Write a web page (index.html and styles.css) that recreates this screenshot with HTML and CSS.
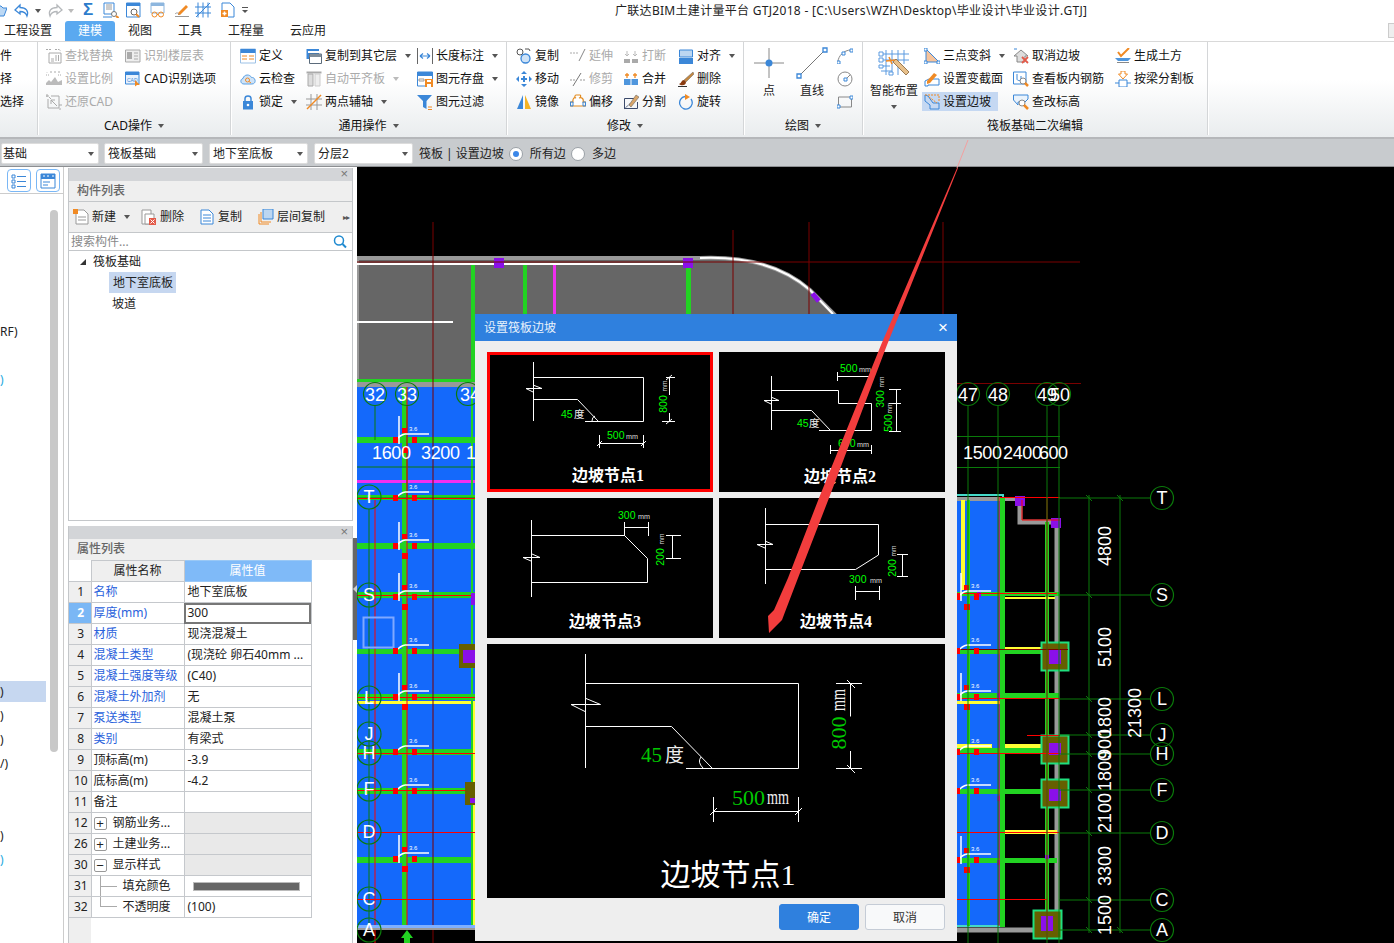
FILE: index.html
```html
<!DOCTYPE html>
<html lang="zh-CN">
<head>
<meta charset="utf-8">
<title>广联达BIM土建计量平台 GTJ2018</title>
<link rel="stylesheet" href="styles.css">
</head>
<body>
<div class="app">
  <header class="qat">
    <div class="qat-icons">
      <svg class="qi q-folder" viewBox="0 0 7 16"><path d="M-8 4H1L3 6H7L4 14H-8Z" fill="#bcd8f4" stroke="#3b87d8"/></svg>
      <svg class="qi" viewBox="0 0 16 16"><path d="M6 3L1 8L6 12V9.500C10 9.500 12 11 13 14C15 9 12 5.500 6 5.500Z" fill="#fff" stroke="#3b87d8" stroke-width="1.300"/></svg>
      <i class="ar q-ar"></i>
      <svg class="qi q-redo" viewBox="0 0 16 16"><path d="M10 3L15 8L10 12V9.500C6 9.500 4 11 3 14C1 9 4 5.500 10 5.500Z" fill="#fff" stroke="#b5b8bb" stroke-width="1.300"/></svg>
      <i class="ar q-ar lite"></i>
      <span class="sigma">Σ</span>
      <svg class="qi q-r" viewBox="0 0 16 16"><path d="M1 1H11V12H1Z" fill="#fff" stroke="#3b87d8"/><path d="M3 3H9M3 5H9M3 7H9" stroke="#9a9a9a"/><path d="M0 15H9" stroke="#3b87d8"/><circle cx="11" cy="12" r="2.500" fill="#fff" stroke="#777"/><path d="M13 14L15.500 16" stroke="#f08a24" stroke-width="2"/></svg>
      <svg class="qi q-r6" viewBox="0 0 16 16"><path d="M.5 1H14V15H.5Z" fill="#fff" stroke="#3b87d8"/><path d="M.5 1H14V4H.5Z" fill="#3b87d8"/><circle cx="8" cy="10" r="3" fill="#fff" stroke="#666"/><path d="M10 12L13 15" stroke="#f08a24" stroke-width="2"/></svg>
      <svg class="qi q-r2" viewBox="0 0 16 16"><path d="M1 1H14V11H1Z" fill="#fff" stroke="#8db6de"/><path d="M1 1H14V4H1Z" fill="#8db6de"/><circle cx="4.500" cy="12.500" r="2.500" fill="none" stroke="#f08a24"/><circle cx="11" cy="12.500" r="2.500" fill="none" stroke="#f08a24"/><path d="M7 12.500H8.500" stroke="#f08a24"/></svg>
      <svg class="qi q-r2" viewBox="0 0 16 16"><path d="M1 14.500H15" stroke="#999"/><path d="M4 11L12 3L14 5L6 13H4Z" fill="#f08a24"/><path d="M1 12C3 10 4 11 6 13" fill="none" stroke="#999"/></svg>
      <svg class="qi q-r4" viewBox="0 0 16 16"><path d="M3 .5V15.500M8 .5V15.500M13 .5V15.500M0 5H16M0 11H16M1 15L15 1" stroke="#3b87d8" fill="none"/></svg>
      <svg class="qi q-r5" viewBox="0 0 16 16"><path d="M2 8V1H10L14 5V15H8" fill="#fff" stroke="#3b87d8"/><path d="M1 8H8V15H1Z" fill="#f08a24"/><path d="M4.500 9.500V13.500M2.500 11.500H6.500" stroke="#fff" stroke-width="1.500"/></svg>
      <span class="qat-more"></span>
    </div>
    <div class="title">广联达BIM土建计量平台 GTJ2018 - [C:\Users\WZH\Desktop\毕业设计\毕业设计.GTJ]</div>
  </header>

  <nav class="tabs">
    <span class="tab t1">工程设置</span>
    <span class="tab active">建模</span>
    <span class="tab t3">视图</span>
    <span class="tab t3">工具</span>
    <span class="tab t3">工程量</span>
    <span class="tab t6">云应用</span>
    <span class="corner-box"></span>
  </nav>

  <section class="ribbon">
    <div class="rg g0">
      <div class="cols">
        <div class="col"><div class="ri">件</div><div class="ri">择</div><div class="ri">选择</div></div>
      </div>
    </div>

    <div class="rg g-cad">
      <div class="cols">
        <div class="col c79">
          <div class="ri off"><svg class="ic" viewBox="0 0 16 16"><path d="M0 1.500H6M9 1.500H13L15 3" fill="none" stroke="#aaa" stroke-dasharray="2 1"/><path d="M3 5H15V15H3Z" fill="#fff" stroke="#aaa"/><path d="M10 7V13M12.500 7V13M5 11H8M5 13H8" stroke="#aaa"/></svg>查找替换</div>
          <div class="ri off"><svg class="ic" viewBox="0 0 16 16"><path d="M1 1.500V1M4 1H6M8 1H10M12 1H14" stroke="#aaa"/><path d="M0 14H16V9L12 11L9 6L5 11L3 9L0 12Z" fill="#bbb"/><path d="M0 4H4M12 4H16" stroke="#aaa" stroke-dasharray="1 1"/></svg>设置比例</div>
          <div class="ri off"><svg class="ic" viewBox="0 0 16 16"><path d="M2 5V14H13V2H5" fill="none" stroke="#aaa"/><path d="M5 5L3 3M11 12L5 6M5 6V10M5 6H9" fill="none" stroke="#aaa"/><path d="M0 2H3M1 0V3M13 11H16M14 14V16" stroke="#aaa"/></svg>还原CAD</div>
        </div>
        <div class="col">
          <div class="ri off"><svg class="ic" viewBox="0 0 16 16"><path d="M.5 2H15V14H.5Z" fill="#eee" stroke="#aaa"/><path d="M2 4H7V11H2Z" fill="#aaa"/><path d="M9 5H13M9 8H13M9 11H13" stroke="#aaa"/></svg>识别楼层表</div>
          <div class="ri"><svg class="ic" viewBox="0 0 16 16"><path d="M.5 1H14V13H.5Z" fill="#eaf3fc" stroke="#3b87d8"/><path d="M.5 1H14V4H.5Z" fill="#3b87d8"/><text class="mini" x="2" y="10.500">CAD</text><path d="M10 9V15.500L12 14H15Z" fill="#f08a24"/></svg>CAD识别选项</div>
        </div>
      </div>
      <div class="rl">CAD操作<i class="ar"></i></div>
    </div>

    <div class="rg g-com">
      <div class="cols">
        <div class="col c66">
          <div class="ri"><svg class="ic" viewBox="0 0 16 16"><path d="M.5 1H15.500V15H.5Z" fill="#fff" stroke="#9cc1e6"/><path d="M.5 1H15.500V5H.5Z" fill="#3b87d8"/><path d="M2 8H7M9 8H14M2 11H7M9 11H14" stroke="#f08a24"/></svg>定义</div>
          <div class="ri"><svg class="ic" viewBox="0 0 16 16"><path d="M4 13C0 13 0 8 3 7.500C4 3 10 3 11.500 6.500C16 6 16.500 13 12 13Z" fill="#cfe3f7" stroke="#5aa0e3"/><circle cx="7.500" cy="9" r="2" fill="none" stroke="#f08a24"/><path d="M9 10.500L11 12" stroke="#f08a24"/></svg>云检查</div>
          <div class="ri"><svg class="ic" viewBox="0 0 16 16"><path d="M5 7V4.500C5 1 11 1 11 4.500V7" fill="none" stroke="#3b87d8" stroke-width="1.500"/><path d="M3 7H13V15.500H3Z" fill="#3b87d8"/><circle cx="8" cy="11" r="1.300" fill="#fff"/></svg>锁定<i class="ar"></i></div>
        </div>
        <div class="col c111">
          <div class="ri"><svg class="ic" viewBox="0 0 16 16"><path d="M.5 1H13V11H.5Z" fill="#3b87d8"/><path d="M2 3H13V5H2Z" fill="#fff"/><path d="M3.500 6H15.500V15.500H3.500Z" fill="#fff" stroke="#5b6b7b"/><path d="M3.500 6H15.500V9H3.500Z" fill="#7f8d9a"/></svg>复制到其它层<i class="ar"></i></div>
          <div class="ri off"><svg class="ic" viewBox="0 0 16 16"><path d="M.5 1.500H15.500" stroke="#aaa" stroke-width="2"/><path d="M2 3H7V15H2Z" fill="#ddd" stroke="#aaa"/><path d="M9 3H14V15H9Z" fill="#eee" stroke="#ccc"/></svg>自动平齐板<i class="ar lite"></i></div>
          <div class="ri"><svg class="ic" viewBox="0 0 16 16"><path d="M5 0V16M11 0V16M0 5H16M0 11H16" stroke="#999"/><path d="M1 15L15 1" stroke="#f08a24" stroke-width="1.500"/></svg>两点辅轴<i class="ar"></i></div>
        </div>
        <div class="col">
          <div class="ri"><svg class="ic" viewBox="0 0 16 16"><path d="M.5 0V16M15.500 0V16" stroke="#666"/><path d="M3 8H13M3 8L6 5.500M3 8L6 10.500M13 8L10 5.500M13 8L10 10.500" fill="none" stroke="#3b87d8" stroke-width="1.200"/></svg>长度标注<i class="ar"></i></div>
          <div class="ri"><svg class="ic" viewBox="0 0 16 16"><path d="M.5 1H15.500V15H.5Z" fill="#fff" stroke="#3b87d8"/><path d="M.5 1H15.500V5H.5Z" fill="#3b87d8"/><path d="M2 8H7V10H2Z" fill="none" stroke="#999"/><path d="M8 8H16V16H8Z" fill="#f08a24"/><path d="M10 9H14V11H10ZM10 13H14V16H10Z" fill="#fff"/></svg>图元存盘<i class="ar"></i></div>
          <div class="ri"><svg class="ic" viewBox="0 0 16 16"><path d="M0 1H15L9.500 7V15L6 13V7Z" fill="#3b87d8"/><path d="M11 13H15M11 15.500H15" stroke="#f08a24"/></svg>图元过滤</div>
        </div>
      </div>
      <div class="rl">通用操作<i class="ar"></i></div>
    </div>

    <div class="rg g-mod">
      <div class="cols">
        <div class="col c54">
          <div class="ri"><svg class="ic" viewBox="0 0 16 16"><circle cx="4" cy="4" r="3" fill="#fff" stroke="#555"/><circle cx="9.500" cy="10.500" r="4.500" fill="#cfe3f7" stroke="#3b87d8" stroke-width="1.300"/><path d="M9 1H13L14 3" fill="none" stroke="#555"/></svg>复制</div>
          <div class="ri"><svg class="ic" viewBox="0 0 16 16"><path d="M8 0L5 3H11ZM8 16L5 13H11ZM0 8L3 5V11ZM16 8L13 5V11Z" fill="#3b87d8"/><path d="M5 8H11M8 5V11" stroke="#3b87d8" stroke-width="2"/></svg>移动</div>
          <div class="ri"><svg class="ic" viewBox="0 0 16 16"><path d="M7 1V15H1Z" fill="#3b87d8"/><path d="M9 1V15H15Z" fill="#f5b324"/></svg>镜像</div>
        </div>
        <div class="col c53">
          <div class="ri off"><svg class="ic" viewBox="0 0 16 16"><path d="M0 5H9" stroke="#aaa" stroke-dasharray="2 1"/><path d="M9 13L15 1" stroke="#888"/></svg>延伸</div>
          <div class="ri off"><svg class="ic" viewBox="0 0 16 16"><path d="M0 9H5M10 9H16" stroke="#999" stroke-dasharray="2 1"/><path d="M3 15L11 2" stroke="#777"/></svg>修剪</div>
          <div class="ri"><svg class="ic" viewBox="0 0 16 16"><path d="M6 1H10C11 1 11 4 9 4C12 3 14 5 13 8H15.500V12H.5V8H3C2.500 5 4 3 6 4C4 4 5 1 6 1Z" fill="#fff" stroke="#e28a1e" stroke-width="1.200"/><path d="M.5 8H3V12H.5Z" fill="none" stroke="#3b87d8"/><path d="M13 8H15.500V12H13Z" fill="none" stroke="#3b87d8"/></svg>偏移</div>
        </div>
        <div class="col c55">
          <div class="ri off"><svg class="ic" viewBox="0 0 16 16"><path d="M1 11H7V15H1ZM9 11H15V15H9Z" fill="#aaa"/><path d="M4 3V8M2 6L4 8L6 6M12 3V8M10 6L12 8L14 6" fill="none" stroke="#bbb"/></svg>打断</div>
          <div class="ri"><svg class="ic" viewBox="0 0 16 16"><path d="M1 8H15V14H1Z" fill="#4f96dd"/><path d="M8 8V14" stroke="#fff"/><path d="M4 2V7M2 4H6M12 2V7M10 4H14" stroke="#f08a24" stroke-width="1.300"/></svg>合并</div>
          <div class="ri"><svg class="ic" viewBox="0 0 16 16"><path d="M1.500 4.500H12M1.500 4.500V14.500H14.500V8" fill="none" stroke="#3b4a6b"/><path d="M1 15L9 8" stroke="#3b4a6b" stroke-dasharray="2 1"/><path d="M6 11L13 1L16 3L8 13Z" fill="#d9a66a" stroke="#555" stroke-width=".500"/></svg>分割</div>
        </div>
        <div class="col">
          <div class="ri"><svg class="ic" viewBox="0 0 16 16"><path d="M1.500 2H14.500V9H1.500Z" fill="#bcd6f1" stroke="#3b87d8"/><path d="M1 10H15V16H1Z" fill="#3b87d8"/></svg>对齐<i class="ar"></i></div>
          <div class="ri"><svg class="ic" viewBox="0 0 16 16"><path d="M15 1L6 9L8 11L16 3Z" fill="#c4873f" stroke="#666" stroke-width=".500"/><path d="M6 9C3 9 4 12 1 13C3 15 8 15 8 11Z" fill="#8a3b10"/><path d="M0 15.500H9" stroke="#333"/></svg>删除</div>
          <div class="ri"><svg class="ic" viewBox="0 0 16 16"><path d="M7 2.500A6.300 6.300 0 1 0 13 5" fill="none" stroke="#3b87d8" stroke-width="1.300"/><path d="M7 0V6L12 3Z" fill="#f08a24"/></svg>旋转</div>
        </div>
      </div>
      <div class="rl">修改<i class="ar"></i></div>
    </div>

    <div class="rg g-drw">
      <div class="cols">
        <div class="big b-pt">
          <svg class="ic32" viewBox="0 0 32 32"><path d="M16 1V31M1 16H31" stroke="#888"/><circle cx="16" cy="16" r="3.500" fill="#3b87d8"/></svg>
          <span class="bl">点</span>
        </div>
        <div class="big b-ln">
          <svg class="ic32" viewBox="0 0 32 32"><path d="M3 29L29 3" stroke="#777"/><path d="M1 27H5V31H1ZM27 1H31V5H27Z" fill="#fff" stroke="#3b87d8" stroke-width="1.300"/></svg>
          <span class="bl">直线</span>
        </div>
        <div class="col c-small">
          <div class="ri"><svg class="ic" viewBox="0 0 16 16"><path d="M1 14C1 8 7 2 14 2" fill="none" stroke="#888"/><path d="M0 13H3V16H0ZM13 1H16V4H13ZM5 4H8V7H5Z" fill="#fff" stroke="#3b87d8"/></svg></div>
          <div class="ri"><svg class="ic" viewBox="0 0 16 16"><circle cx="8" cy="8" r="7" fill="none" stroke="#888"/><path d="M7 7H10V10H7Z" fill="#fff" stroke="#3b87d8"/><path d="M10 7L13 4" stroke="#888"/></svg></div>
          <div class="ri"><svg class="ic" viewBox="0 0 16 16"><path d="M1.500 3H14.500V13H1.500Z" fill="none" stroke="#888"/><path d="M0 11H3V14H0ZM13 2H16V5H13Z" fill="#fff" stroke="#3b87d8"/></svg></div>
        </div>
      </div>
      <div class="rl">绘图<i class="ar"></i></div>
    </div>

    <div class="rg g-raft">
      <div class="cols">
        <div class="big b-smart">
          <svg class="ic32" viewBox="0 0 32 32"><path d="M8 3V28M14 3V28M20 3V28M26 3V17M3 7H31M3 13H31M3 19H12M3 24H14" stroke="#5a9ae0"/><path d="M1 5H5V9H1ZM1 11H5V15H1ZM1 18H5V21H1ZM11 25H15V28H11Z" fill="#fff" stroke="#5a9ae0"/><path d="M15 15L28 28L31 25L18 12Z" fill="#e8c08a" stroke="#9a7b55"/><path d="M11 10L14 17M8 14L17 13" stroke="#f08a24" stroke-width="1.500"/></svg>
          <span class="bl">智能布置</span>
          <i class="ar b-ar"></i>
        </div>
        <div class="col c90">
          <div class="ri"><svg class="ic" viewBox="0 0 16 16"><path d="M2 1V14H15Z" fill="#f6c39b" stroke="#3b87d8"/><path d="M0 0H3V3H0ZM0 13H3V16H0ZM13 13H16V16H13Z" fill="#fff" stroke="#3b87d8"/></svg>三点变斜<i class="ar"></i></div>
          <div class="ri"><svg class="ic" viewBox="0 0 16 16"><path d="M1 15V10L5 8H15V14H4V15Z" fill="none" stroke="#3b87d8"/><path d="M3 10L10 2L13 4L6 12L3 13Z" fill="#f08a24"/></svg>设置变截面</div>
          <div class="ri hl"><svg class="ic" viewBox="0 0 16 16"><path d="M1 1V7L6 11V15H15V9H9L4 2Z" fill="none" stroke="#3b87d8"/><path d="M1 1H15M15 2V8" stroke="#f08a24" stroke-dasharray="2 1"/><path d="M5 3L13 9" stroke="#f08a24" stroke-dasharray="2 1"/></svg>设置边坡</div>
        </div>
        <div class="col c102">
          <div class="ri"><svg class="ic" viewBox="0 0 16 16"><path d="M1 8L8 2L15 8H12V14H4V8Z" fill="#ddd" stroke="#888"/><path d="M1 1H4" stroke="#3b87d8"/><path d="M9 9L15 15M15 9L9 15" stroke="#e35b4a" stroke-width="1.800"/></svg>取消边坡</div>
          <div class="ri"><svg class="ic" viewBox="0 0 16 16"><path d="M.5 1H13V13H.5Z" fill="#fff" stroke="#3b87d8"/><path d="M4 3V8C4 10 8 10 8 8V5" fill="none" stroke="#3b87d8"/><circle cx="10" cy="10" r="3" fill="#fff" stroke="#888"/><path d="M12 12L15 15" stroke="#f08a24" stroke-width="2.500"/></svg>查看板内钢筋</div>
          <div class="ri"><svg class="ic" viewBox="0 0 16 16"><path d="M.5 1H15V5L12 8H5V11L.5 6Z" fill="#eaf3fc" stroke="#3b87d8"/><circle cx="9" cy="9" r="3" fill="#fff" stroke="#888"/><path d="M11 11L15 15" stroke="#f08a24" stroke-width="2.500"/></svg>查改标高</div>
        </div>
        <div class="col">
          <div class="ri"><svg class="ic" viewBox="0 0 16 16"><path d="M3 4L6 8L14 0" fill="none" stroke="#f08a24" stroke-width="2"/><path d="M0 10H16L13 13H3Z" fill="#4f96dd"/><path d="M2 14.500H14" stroke="#888"/></svg>生成土方</div>
          <div class="ri"><svg class="ic" viewBox="0 0 16 16"><path d="M6 0H10V3H12.500L8 8L3.500 3H6Z" fill="#fff" stroke="#f08a24"/><path d="M4 9H12V16H4Z" fill="#fff" stroke="#3b87d8"/><path d="M0 12H4M12 12H16" stroke="#3b87d8"/></svg>按梁分割板</div>
        </div>
      </div>
      <div class="rl">筏板基础二次编辑</div>
    </div>
  </section>

  <section class="toolbar">
    <div class="sel">基础<i class="ar"></i></div>
    <div class="sel">筏板基础<i class="ar"></i></div>
    <div class="sel">地下室底板<i class="ar"></i></div>
    <div class="sel">分层2<i class="ar"></i></div>
    <span class="tb-text">筏板 | 设置边坡</span>
    <span class="radio on"></span><span class="tb-l">所有边</span>
    <span class="radio"></span><span class="tb-l">多边</span>
  </section>

  <main class="main">
    <aside class="nav">
      <div class="nav-top">
        <span class="nav-btn"><svg viewBox="0 0 16 16"><path d="M1 2H4V5H1ZM1 7H4V10H1ZM1 12H4V15H1Z" fill="none" stroke="#3b87d8"/><path d="M6 3.500H15M6 8.500H15M6 13.500H15" stroke="#3b87d8"/></svg></span>
        <span class="nav-btn"><svg viewBox="0 0 16 16"><path d="M1 1H15V15H1Z" fill="#fff" stroke="#3b87d8"/><path d="M1 1H15V6H1Z" fill="#3b87d8"/><path d="M3 3H5M7 3H9M12 3H14" stroke="#fff"/><path d="M3 9H10M3 12H8" stroke="#3b87d8"/></svg></span>
      </div>
      <div class="nav-body">
        <div class="nav-list">
          <div class="nr">RF)</div><div class="nr"></div><div class="nr blue">)</div>
          <div class="nr"></div><div class="nr"></div><div class="nr"></div><div class="nr"></div><div class="nr"></div>
          <div class="nr"></div><div class="nr"></div><div class="nr"></div><div class="nr"></div><div class="nr"></div>
          <div class="nr"></div><div class="nr"></div>
          <div class="nr cur">)</div><div class="nr">)</div><div class="nr">)</div><div class="nr">/)</div>
          <div class="nr"></div><div class="nr"></div><div class="nr">)</div><div class="nr blue">)</div>
        </div>
        <div class="nav-sb"></div>
      </div>
    </aside>

    <div class="panels">
      <section class="panel p1">
        <div class="strip">×</div>
        <div class="ptitle">构件列表</div>
        <div class="ptools">
          <span class="pt pt-new"><svg class="ic" viewBox="0 0 16 16"><path d="M3 1H11L15 5V15H3Z" fill="#fff" stroke="#999"/><path d="M0 0H5V5H0Z" fill="#f08a24"/><path d="M5 8H13M5 11H13" stroke="#999"/></svg>新建<i class="ar"></i></span>
          <span class="pt pt-del"><svg class="ic" viewBox="0 0 16 16"><path d="M1 1H10V15H1Z" fill="#fff" stroke="#999"/><path d="M4 5H13V15H4Z" fill="#fff" stroke="#999"/><path d="M8 9H15V16H8Z" fill="#e35b4a"/><path d="M9.500 10.500L13.500 14.500M13.500 10.500L9.500 14.500" stroke="#fff"/></svg>删除</span>
          <span class="pt pt-cpy"><svg class="ic" viewBox="0 0 16 16"><path d="M2 1H10L14 5V15H2Z" fill="#fff" stroke="#3b87d8"/><path d="M4 6H12M4 9H12M4 12H12" stroke="#3b87d8"/></svg>复制</span>
          <span class="pt pt-flr"><svg class="ic" viewBox="0 0 16 16"><path d="M5 0H15V10H5Z" fill="#bcd6f1" stroke="#3b87d8"/><path d="M3 3V13H13M1 5V15H11" fill="none" stroke="#f08a24"/></svg>层间复制</span>
          <span class="pt-more">▸▸</span>
        </div>
        <div class="psearch"><span>搜索构件...</span><svg class="ic" viewBox="0 0 16 16"><circle cx="7" cy="6.500" r="4.500" fill="none" stroke="#1f8ad0" stroke-width="1.500"/><path d="M10.500 10L14 13.500" stroke="#1f8ad0" stroke-width="2"/></svg></div>
        <div class="ptree">
          <div class="tn root"><i class="tri"></i>筏板基础</div>
          <div class="tn leaf sel-leaf"><span>地下室底板</span></div>
          <div class="tn leaf"><span>坡道</span></div>
        </div>
      </section>

      <section class="panel p2">
        <div class="strip">×</div>
        <div class="ptitle p2t">属性列表</div>
        <div class="tblwrap">
          <table class="props">
            <thead><tr><th class="no blank"></th><th class="nm hd">属性名称</th><th class="vl hdv">属性值</th></tr></thead>
            <tbody>
              <tr><td class="no">1</td><td class="nm lk">名称</td><td class="vl">地下室底板</td></tr>
              <tr><td class="no act">2</td><td class="nm lk">厚度(mm)</td><td class="vl edit">300</td></tr>
              <tr><td class="no">3</td><td class="nm lk">材质</td><td class="vl">现浇混凝土</td></tr>
              <tr><td class="no">4</td><td class="nm lk">混凝土类型</td><td class="vl">(现浇砼 卵石40mm ...</td></tr>
              <tr><td class="no">5</td><td class="nm lk">混凝土强度等级</td><td class="vl">(C40)</td></tr>
              <tr><td class="no">6</td><td class="nm lk">混凝土外加剂</td><td class="vl">无</td></tr>
              <tr><td class="no">7</td><td class="nm lk">泵送类型</td><td class="vl">混凝土泵</td></tr>
              <tr><td class="no">8</td><td class="nm lk">类别</td><td class="vl">有梁式</td></tr>
              <tr><td class="no">9</td><td class="nm">顶标高(m)</td><td class="vl">-3.9</td></tr>
              <tr><td class="no">10</td><td class="nm">底标高(m)</td><td class="vl">-4.2</td></tr>
              <tr><td class="no">11</td><td class="nm">备注</td><td class="vl"></td></tr>
              <tr><td class="no">12</td><td class="nm"><div class="gr"><span class="pm">+</span>钢筋业务...</div></td><td class="vl mute"></td></tr>
              <tr><td class="no">26</td><td class="nm"><div class="gr"><span class="pm">+</span>土建业务...</div></td><td class="vl mute"></td></tr>
              <tr><td class="no">30</td><td class="nm"><div class="gr"><span class="pm">−</span>显示样式</div></td><td class="vl mute"></td></tr>
              <tr><td class="no">31</td><td class="nm"><div class="gr"><span class="cn full"></span>填充颜色</div></td><td class="vl"><div class="swatch"></div></td></tr>
              <tr><td class="no">32</td><td class="nm"><div class="gr"><span class="cn half"></span>不透明度</div></td><td class="vl">(100)</td></tr>
            </tbody>
          </table>
          <div class="gutter"></div>
        </div>
      </section>
    </div>

    <div class="split"><div class="split-bar"><i></i></div></div>

    <div class="canvas">
      <svg class="cad" viewBox="357 167 1037 776">
        <defs>
          <g id="mk">
            <path class="wl" d="M405 0H429M405 0Q400 1 396 6"/>
            <text class="tiny" x="409" y="-3">3.6</text>
            <rect class="rd" x="393" y="3" width="5" height="6"/>
            <rect class="rd" x="412" y="3" width="5" height="6"/>
          </g>
          <g id="mt">
            <use href="#mk"/>
            <path class="wl" d="M399 -18V10"/>
            <rect class="rd" x="402" y="-6" width="5" height="5"/>
            <rect class="rd" x="402" y="13" width="6" height="6"/>
          </g>
        </defs>

        <!-- slab -->
        <path class="slab" d="M357 258H700Q770 255 810 290L836 316V384H357Z"/>
        <path class="wl2" d="M357 264H690M357 322H453M700 258Q770 255 810 290L833 314"/>
        <rect class="br-g" x="471" y="265" width="4" height="114"/>
        <rect class="br-g" x="523" y="265" width="4" height="50"/>
        <rect class="mg" x="553" y="265" width="3" height="50"/>
        <rect class="br-g" x="686" y="265" width="5" height="50"/>
        <rect class="pp" x="494" y="258" width="10" height="10"/>
        <rect class="pp" x="683" y="258" width="10" height="10"/>
        <rect class="pp" x="811" y="295" width="10" height="5" transform="rotate(50 816 297)"/>
        <rect class="br-g" x="357" y="379" width="118" height="3"/>
        <rect class="gy" x="357" y="383" width="118" height="4"/>

        <!-- left blue -->
        <rect class="bl-f" x="357" y="387" width="118" height="538"/>
        <rect class="br-g" x="402" y="387" width="5" height="543"/>
        <rect class="mg" x="357" y="480" width="118" height="3"/>
        <g class="br-gs">
          <rect x="357" y="437" width="118" height="6"/><rect x="357" y="495" width="118" height="5"/>
          <rect x="357" y="543" width="118" height="6"/><rect x="357" y="592" width="118" height="6"/>
          <rect x="357" y="649" width="118" height="5"/><rect x="357" y="694" width="118" height="6"/>
          <rect x="357" y="749" width="118" height="6"/><rect x="357" y="788" width="118" height="6"/>
          <rect x="357" y="857" width="118" height="6"/>
        </g>
        <rect class="yl" x="357" y="701" width="118" height="3"/>
        <rect class="yl" x="472" y="702" width="3" height="223"/>
        <rect class="br-g" x="471" y="387" width="2" height="540"/>
        <path class="dg" d="M375 405V440M407 405V500M357 467H475M369 509V943M357 498H475"/>
        <path class="r1" d="M375 500V943M407 387V925M357 595.500H475M357 697.500H475M357 753.500H475M357 790.500H475M357 832.500H475M357 899.500H475M357 498.500H475"/>
        <path class="dr" d="M433 222V943M357 262H1080M733 230V314M809 222V314M943 222V314M957 383.500H1081"/>
        <rect class="ol" x="459" y="644" width="16" height="24"/>
        <rect class="pp" x="463" y="650" width="12" height="13"/>
        <rect class="ol" x="465" y="782" width="10" height="23"/>
        <rect class="pp" x="470" y="798" width="5" height="5"/>
        <rect class="pp" x="471" y="593" width="4" height="12"/>
        <rect class="sel-box" x="363.500" y="617.500" width="30" height="30"/>
        <rect class="edge" x="357" y="925" width="118" height="3"/>
        <rect class="gy" x="357" y="928" width="118" height="2"/>
        <rect class="blk" x="357" y="930" width="118" height="13"/>
        <path class="br-gf" d="M407 930L413 938H410V943H404V938H401Z"/>
        <path class="dr" d="M433 930V943"/>
        <path class="r1" d="M375 930V943"/>

        <use href="#mt" y="434"/><use href="#mk" y="492"/><use href="#mt" y="540"/><use href="#mt" y="591"/>
        <use href="#mk" y="645"/><use href="#mt" y="691"/><use href="#mk" y="746"/><use href="#mk" y="785"/><use href="#mt" y="853"/>

        <text class="dim" x="372" y="459" textLength="39">1600</text>
        <text class="dim" x="421" y="459" textLength="39">3200</text>
        <text class="dim" x="466" y="459">1</text>
        <g class="ax">
          <circle cx="375" cy="394" r="11.500"/><circle cx="407" cy="394" r="11.500"/><circle cx="468" cy="394" r="11.500"/>
          <circle cx="369" cy="497" r="12"/><circle cx="369" cy="595" r="12"/><circle cx="369" cy="698" r="12"/><circle cx="369" cy="734" r="12"/><circle cx="369" cy="753" r="12"/><circle cx="369" cy="789" r="12"/><circle cx="369" cy="832" r="12"/><circle cx="369" cy="899" r="12"/><circle cx="369" cy="930" r="12"/>
        </g>
        <g class="axt">
          <text x="375" y="401">32</text><text x="407" y="401">33</text><text x="470" y="401">34</text>
          <text x="369" y="503">T</text><text x="369" y="601">S</text><text x="369" y="704">L</text><text x="369" y="740">J</text><text x="369" y="759">H</text><text x="369" y="795">F</text><text x="369" y="838">D</text><text x="369" y="905">C</text><text x="369" y="936">A</text>
        </g>

        <!-- right part -->
        <rect class="bl-f" x="957" y="497" width="43" height="429"/>
        <path class="cy" d="M957 495H1003V926H957"/>
        <rect class="gy" x="957" y="497" width="63" height="4"/>
        <path class="gyl" d="M1020 499V522H1057V930H957"/>
        <rect class="br-g" x="967" y="500" width="3" height="426"/>
        <rect class="br-g" x="1000" y="497" width="5" height="430"/>
        <rect class="br-g" x="1045" y="522" width="4" height="405"/>
        <g class="br-gs">
          <rect x="957" y="592" width="102" height="4"/><rect x="957" y="649" width="102" height="5"/>
          <rect x="957" y="693" width="102" height="5"/><rect x="957" y="748" width="90" height="5"/>
          <rect x="957" y="789" width="90" height="5"/><rect x="957" y="858" width="100" height="5"/>
        </g>
        <rect class="yl" x="961" y="500" width="4" height="90"/>
        <rect class="yl" x="1005" y="597" width="50" height="2"/>
        <rect class="yl" x="1005" y="647" width="42" height="2"/>
        <rect class="yl" x="1005" y="744" width="40" height="4"/>
        <rect class="yl" x="957" y="744" width="35" height="4"/>
        <rect class="yl" x="957" y="701" width="43" height="3"/>
        <rect class="yl" x="1005" y="830" width="52" height="4"/>
        <g class="padg">
          <rect x="1041.500" y="642.500" width="27" height="28"/><rect x="1041.500" y="735.500" width="27" height="28"/><rect x="1041.500" y="779.500" width="27" height="28"/><rect x="1033.500" y="910.500" width="28" height="28"/>
        </g>
        <rect class="pp" x="1049" y="649" width="12" height="15"/><rect class="pp" x="1049" y="743" width="12" height="12"/><rect class="pp" x="1049" y="789" width="12" height="12"/><rect class="pp" x="1041" y="916" width="12" height="15"/>
        <rect class="pp" x="1015" y="496" width="10" height="10"/><rect class="pp" x="1051" y="518" width="10" height="10"/>
        <rect class="pp" x="977" y="592" width="4" height="5"/><rect class="pp" x="997" y="693" width="3" height="5"/>
        <rect class="pp" x="997" y="796" width="3" height="5"/><rect class="pp" x="997" y="860" width="3" height="5"/><rect class="pp" x="1045" y="855" width="4" height="4"/>
        <path class="r1" d="M999 497V926M1047 497V940M1000 497.500H1060M1022 500V520H1060M957 593.500H1057M957 698.500H1060M1027 735.500H1060M957 753.500H1060M957 832.500H1060M957 899.500H1047"/>
        <path class="dr" d="M957 649.500H1068"/>
        <use href="#mk" x="562" y="645"/><use href="#mt" x="562" y="591"/><use href="#mt" x="562" y="691"/><use href="#mk" x="562" y="746"/><use href="#mk" x="562" y="785"/><use href="#mt" x="562" y="854"/>
        <path class="dg" d="M968 406V943M998 406V943M1047 406V943M1059 406V943M957 436.500H1060M957 467.500H1060M1059 498H1150M1059 595H1150M1059 699H1150M1059 735H1150M1059 754H1150M1059 790H1150M1059 833H1150M1059 900H1150M1059 930H1150M1089 495V933M1120 495V933"/>
        <path class="dg" d="M1086 495L1092 501M1086 592L1092 598M1086 696L1092 702M1086 732L1092 738M1086 751L1092 757M1086 787L1092 793M1086 830L1092 836M1086 897L1092 903M1086 927L1092 933M1117 495L1123 501M1117 927L1123 933"/>
        <text class="dim" x="963" y="459" textLength="39">1500</text>
        <text class="dim" x="1003" y="459" textLength="39">2400</text>
        <text class="dim" x="1039" y="459" textLength="29">600</text>
        <g class="ax">
          <circle cx="968" cy="394" r="11.500"/><circle cx="998" cy="394" r="11.500"/><circle cx="1047" cy="394" r="11.500"/><circle cx="1059" cy="394" r="11.500"/>
          <circle cx="1162" cy="498" r="11.500"/><circle cx="1162" cy="595" r="11.500"/><circle cx="1162" cy="699" r="11.500"/><circle cx="1162" cy="735" r="11.500"/><circle cx="1162" cy="754" r="11.500"/><circle cx="1162" cy="790" r="11.500"/><circle cx="1162" cy="833" r="11.500"/><circle cx="1162" cy="900" r="11.500"/><circle cx="1162" cy="930" r="11.500"/>
        </g>
        <g class="axt">
          <text x="968" y="401">47</text><text x="998" y="401">48</text><text x="1047" y="401">49</text><text x="1060" y="401">50</text>
          <text x="1162" y="504">T</text><text x="1162" y="601">S</text><text x="1162" y="705">L</text><text x="1162" y="741">J</text><text x="1162" y="760">H</text><text x="1162" y="796">F</text><text x="1162" y="839">D</text><text x="1162" y="906">C</text><text x="1162" y="936">A</text>
        </g>
        <g class="dimv">
          <text transform="rotate(-90 1111 546)" x="1111" y="546">4800</text>
          <text transform="rotate(-90 1111 647)" x="1111" y="647">5100</text>
          <text transform="rotate(-90 1111 717)" x="1111" y="717">1800</text>
          <text transform="rotate(-90 1111 744)" x="1111" y="744">900</text>
          <text transform="rotate(-90 1111 771)" x="1111" y="771">1800</text>
          <text transform="rotate(-90 1111 813)" x="1111" y="813">2100</text>
          <text transform="rotate(-90 1111 866)" x="1111" y="866">3300</text>
          <text transform="rotate(-90 1111 915)" x="1111" y="915">1500</text>
          <text transform="rotate(-90 1141 713)" x="1141" y="713">21300</text>
        </g>
      </svg>

      <div class="dialog">
        <div class="dlg-h"><span>设置筏板边坡</span><span class="dlg-x">×</span></div>
        <div class="dlg-b">
          <div class="thumb sel-t">
            <svg viewBox="487 352 226 140">
              <path class="th" d="M533.500 362V421M533.500 377.500H643.500V421.500H585M533.500 399.500H577.500L598.500 421.500M526 388.500H542L533 385M526 388.500L533 392M592 421Q592 417 595 416"/>
              <path class="th" d="M599.500 435V448M643.500 435V448M599.500 443.500H643.500M597 446L602 441M641 446L646 441M669.500 377V395M669.500 413V422M666 377.500H675M662 421.500H675M666 424L672 419M666 380L672 375"/>
              <text class="gs" x="561" y="417.500">45</text><text class="ws" x="574" y="417.500">度</text>
              <text class="gs" x="607" y="439">500</text><text class="wm" x="626" y="439" textLength="12" lengthAdjust="spacingAndGlyphs">mm</text>
              <text class="gs" transform="rotate(-90 667 404)" x="667" y="404" text-anchor="middle">800</text>
              <text class="wm" transform="rotate(-90 667 386)" x="667" y="386" text-anchor="middle" textLength="11" lengthAdjust="spacingAndGlyphs">mm</text>
              <text class="tt" x="608" y="481">边坡节点1</text>
            </svg>
          </div>
          <div class="thumb">
            <svg viewBox="719 352 226 140">
              <path class="th" d="M771.500 376V430M771.500 390.500H838.500V403.500H871.500V430.500H819M771.500 410.500H811.500L830.500 430.500M764 400.500H779L771 397M764 400.500L771 404"/>
              <path class="th" d="M837.500 372V381M837.500 376.500H871.500M830.500 445V454M871.500 445V454M830.500 450.500H871.500M896.500 389V431M889 389.500H901M889 403.500H901M889 431.500H901"/>
              <text class="gs" x="797" y="427">45</text><text class="ws" x="809" y="427">度</text>
              <text class="gs" x="840" y="372">500</text><text class="wm" x="859" y="372" textLength="12" lengthAdjust="spacingAndGlyphs">mm</text>
              <text class="gs" x="838" y="447">600</text><text class="wm" x="857" y="447" textLength="12" lengthAdjust="spacingAndGlyphs">mm</text>
              <text class="gs" transform="rotate(-90 884 399)" x="884" y="399" text-anchor="middle">300</text>
              <text class="wm" transform="rotate(-90 884 382)" x="884" y="382" text-anchor="middle" textLength="11" lengthAdjust="spacingAndGlyphs">mm</text>
              <text class="gs" transform="rotate(-90 892 423)" x="892" y="423" text-anchor="middle">500</text>
              <text class="wm" transform="rotate(-90 892 408)" x="892" y="408" text-anchor="middle" textLength="11" lengthAdjust="spacingAndGlyphs">mm</text>
              <text class="tt" x="840" y="482">边坡节点2</text>
            </svg>
          </div>
          <div class="thumb">
            <svg viewBox="487 498 226 140">
              <path class="th" d="M531.500 520V597M531.500 535.500H624.500L647.500 558.500V582.500H531.500M523 557.500H540L532 554M523 557.500L531 561"/>
              <path class="th" d="M624.500 522V536M648.500 522V536M624.500 527.500H648.500M672.500 535.500V558.500M666 535.500H681M666 558.500H681"/>
              <text class="gs" x="618" y="519">300</text><text class="wm" x="638" y="519" textLength="12" lengthAdjust="spacingAndGlyphs">mm</text>
              <text class="gs" transform="rotate(-90 664 557)" x="664" y="557" text-anchor="middle">200</text>
              <text class="wm" transform="rotate(-90 664 539)" x="664" y="539" text-anchor="middle" textLength="11" lengthAdjust="spacingAndGlyphs">mm</text>
              <text class="tt" x="605" y="627">边坡节点3</text>
            </svg>
          </div>
          <div class="thumb">
            <svg viewBox="719 498 226 140">
              <path class="th" d="M765.500 508V584M765.500 524.500H878.500V555L855.500 569.500H765.500M757 544.500H773L765 541M757 544.500L765 548"/>
              <path class="th" d="M855.500 586V600M879.500 586V600M855.500 591.500H879.500M902.500 554V576M897 554.500H908M897 576.500H908"/>
              <text class="gs" x="849" y="583">300</text><text class="wm" x="870" y="583" textLength="12" lengthAdjust="spacingAndGlyphs">mm</text>
              <text class="gs" transform="rotate(-90 896 568)" x="896" y="568" text-anchor="middle">200</text>
              <text class="wm" transform="rotate(-90 896 551)" x="896" y="551" text-anchor="middle" textLength="11" lengthAdjust="spacingAndGlyphs">mm</text>
              <text class="tt" x="836" y="627">边坡节点4</text>
            </svg>
          </div>
          <div class="thumb wide">
            <svg viewBox="487 644 458 254">
              <path class="th" d="M585.500 654V768M585.500 683.500H798.500V768.500H686M585.500 726.500H671.500L712.500 768.500M571 704.500H600.500L586 698.500M571 704.500L585 711.500M703 768Q697 762 701 757"/>
              <path class="th" d="M713.500 797V822M798.500 797V822M713.500 811.500H798.500M710 815L717 808M795 815L802 808M850.500 683.500V716.500M850.500 751V768.500M836 683.500H862M836 768.500H862M847 680L855 688M847 765L855 773"/>
              <text class="gb" x="641" y="762">45</text><text class="wb" x="665" y="762">度</text>
              <text class="gb2" x="732" y="805">500</text><text class="wb2" x="767" y="804" textLength="22" lengthAdjust="spacingAndGlyphs">mm</text>
              <text class="gb2" transform="rotate(-90 846 733)" x="846" y="733" text-anchor="middle">800</text>
              <text class="wb2" transform="rotate(-90 845 700)" x="845" y="700" text-anchor="middle" textLength="22" lengthAdjust="spacingAndGlyphs">mm</text>
              <text class="ttb" x="728" y="885">边坡节点1</text>
            </svg>
          </div>
        </div>
        <div class="dlg-f">
          <button class="btn pri" type="button">确定</button>
          <button class="btn" type="button">取消</button>
        </div>
      </div>
    </div>
  </main>
</div>
<svg class="anno" viewBox="0 0 1394 943">
  <path class="anno-thin" d="M968 140L957 168"/>
  <path class="anno-red" d="M957 168H958L887 345L829 498L798 578L785 612L782 620L769 633L768 616L774 610L788 578L819 498L881 345Z"/>
</svg>
</body>
</html>
```
FILE: styles.css
```css
* { box-sizing: border-box; }
html, body { margin: 0; padding: 0; }
body {
  width: 1394px; height: 943px; overflow: hidden; position: relative;
  font: 12px/20px "Noto Sans", "Noto Sans CJK SC", "Liberation Sans", sans-serif;
  color: #222; background: #fff;
}
.app { display: flex; flex-direction: column; height: 943px; }

/* quick access */
.qat { display: flex; height: 21px; align-items: center; flex: none; background: #fff; }
.qat-icons { width: 615px; display: flex; align-items: center; height: 21px; flex: none; }
.qi { width: 16px; height: 16px; flex: none; margin-top: -2px; }
.q-folder { width: 7px; margin-right: 7px; }
.q-redo { margin-left: 6px; }
.q-ar { margin: 0 0 0 4px; }
.sigma { margin-left: 9px; width: 10px; font: bold 17px/18px "Liberation Sans", sans-serif; color: #2c7ccc; margin-top: -2px; }
.q-r { margin-left: 10px; }
.q-r2 { margin-left: 8px; }
.q-r4 { margin-left: 5px; }
.q-r5 { margin-left: 9px; }
.q-r6 { margin-left: 7px; }
.qat-more { width: 6px; height: 6px; margin-left: 6px; margin-top: -2px; border-top: 1px solid #555; position: relative; }
.qat-more::after { content: ""; display: block; margin-top: 2px; border: 3px solid transparent; border-top-color: #555; border-bottom: 0; }
.title { white-space: nowrap; letter-spacing: .3px; }

/* tabs */
.tabs { display: flex; height: 20px; align-items: stretch; flex: none; background: #fff; position: relative; }
.tab { line-height: 20px; white-space: nowrap; }
.t1 { margin-left: 4px; }
.tab.active { margin-left: 13px; width: 50px; text-align: center; color: #fff; background: #5aa9f0; border-radius: 3px 3px 0 0; }
.t3 { margin-left: 13px; margin-right: 13px; }
.tabs .t3 + .t3 { margin-left: 13px; }
.t6 { margin-left: 13px; }
.corner-box { margin-left: auto; width: 6px; height: 15px; margin-top: 2px; border: 1px solid #ccc; border-right: 0; background: #eee; }

/* ribbon */
.ribbon {
  display: flex; height: 98px; flex: none;
  border-top: 1px solid #d9d9d9; border-bottom: 2px solid #b5b7ba;
  background: linear-gradient(#fff 40%, #e9ecee);
}
.rg { display: flex; flex-direction: column; padding-top: 2px; border-right: 1px solid #d4d6d8; box-shadow: 1px 0 0 #fff; margin: 0 0 2px; }
.cols { display: flex; height: 69px; flex: none; }
.col { display: flex; flex-direction: column; }
.ri { height: 23px; display: flex; align-items: center; gap: 3px; white-space: nowrap; color: #111; }
.ri.off { color: #aaa; }
.ri.hl { background: #c5d8f2; width: 76px; margin-left: -2px; padding-left: 2px; height: 19px; margin-top: 2px; margin-bottom: 2px; }
.ic { width: 16px; height: 16px; flex: none; }
.ic32 { width: 32px; height: 32px; display: block; margin-top: 3px; flex: none; }
.mini { font: 5px "Liberation Sans", sans-serif; fill: #3b87d8; }
.ar { display: inline-block; width: 0; height: 0; border: 3px solid transparent; border-top: 4px solid #555; border-bottom: 0; margin-left: 5px; flex: none; }
.ar.lite { border-top-color: #bbb; }
.rl { text-align: center; height: 25px; line-height: 25px; white-space: nowrap; color: #111; }
.rl .ar { margin-left: 6px; vertical-align: 2px; }
.g0 { width: 38px; }
.g-cad { width: 193px; padding-left: 8px; }
.g-cad .rl { margin-left: -8px; }
.g-com { width: 276px; padding-left: 9px; }
.g-com .rl { margin-left: -9px; }
.g-mod { width: 237px; padding-left: 9px; }
.g-mod .rl { margin-left: -9px; }
.g-drw { width: 119px; }
.g-raft { width: 345px; padding-left: 7px; }
.g-raft .rl { margin-left: -7px; }
.c79 { width: 79px; }
.c66 { width: 66px; }
.c111 { width: 111px; }
.c54 { width: 54px; }
.c53 { width: 53px; }
.c55 { width: 55px; }
.c90 { width: 91px; margin-left: 4px; padding-left: 2px; }
.c102 { width: 102px; }
.c-small { width: 16px; margin-left: 2px; }
.big { display: flex; flex-direction: column; align-items: center; }
.bl { line-height: 20px; margin-top: 2px; white-space: nowrap; }
.b-pt { width: 40px; margin-left: 5px; }
.b-ln { width: 46px; }
.b-smart { width: 48px; }
.b-ar { margin: 4px 0 0; }

/* toolbar */
.toolbar { height: 28px; flex: none; background: #c8cbce; display: flex; align-items: center; padding: 2px 0 0 1px; border-bottom: 1px solid #8d8f92; }
.sel { width: 98px; height: 21px; margin-right: 5px; background: #fff; border: 1px solid #dcdcdc; border-radius: 2px; padding-left: 1px; display: flex; align-items: center; justify-content: space-between; padding-right: 4px; }
.sel:nth-child(n+2) { width: 99px; margin-right: 6px; padding-left: 3px; }
.tb-text { margin-right: 5px; }
.radio { width: 14px; height: 14px; border-radius: 50%; background: #fff; border: 1px solid #9aa0a6; margin-right: 7px; flex: none; display: flex; align-items: center; justify-content: center; }
.radio.on::after { content: ""; width: 6px; height: 6px; border-radius: 50%; background: #3b87e8; }
.tb-l { margin-right: 5px; }

/* main */
.main { flex: 1; display: flex; min-height: 0; }
.nav { width: 68px; flex: none; display: flex; flex-direction: column; background: #fff; position: relative; }
.nav-top { height: 27px; display: flex; gap: 5px; padding: 2px 0 0 7px; margin-right: 4px; border-right: 1px solid #ccc; border-bottom: 1px solid #ccc; }
.nav-btn { width: 24px; height: 23px; border: 1px solid #7ab7f5; border-radius: 4px; display: flex; align-items: center; justify-content: center; }
.nav-btn svg { width: 16px; height: 16px; }
.nav-body { flex: 1; display: flex; margin-right: 4px; border-right: 1px solid #ccc; min-height: 0; }
.nav-list { width: 46px; padding-top: 126px; flex: none; }
.nr { height: 24px; line-height: 24px; white-space: nowrap; }
.nr.cur { background: #c6d7f0; height: 21px; line-height: 21px; margin: 1px 0 2px; }
.nr.blue { color: #25a9e0; }
.nav-sb { width: 8px; height: 542px; margin: 16px 0 0 4px; background: #c8c8c8; border-radius: 4px; }

.panels { width: 285px; flex: none; display: flex; flex-direction: column; background: #fff; }
.panel { border-left: 1px solid #c4c7ca; border-right: 1px solid #c4c7ca; display: flex; flex-direction: column; }
.p1 { height: 353px; margin-top: 1px; border-bottom: 1px solid #c4c7ca; margin-bottom: 5px; }
.p2 { flex: 1; min-height: 0; }
.strip { height: 13px; background: #d3d5d8; text-align: right; padding-right: 4px; font: 13px/12px "Liberation Sans", sans-serif; color: #777; flex: none; }
.ptitle { height: 21px; background: #efefef; color: #666; font-weight: 500; padding-left: 8px; border-bottom: 1px solid #c4c7ca; line-height: 20px; flex: none; }
.ptools { height: 31px; background: #efefef; display: flex; align-items: center; border-bottom: 1px solid #c4c7ca; flex: none; position: relative; }
.pt { display: flex; align-items: center; gap: 3px; white-space: nowrap; }
.pt-new { margin-left: 4px; }
.pt-del { margin-left: 11px; }
.pt-cpy { margin-left: 15px; }
.pt-flr { margin-left: 16px; }
.pt .ar { margin-left: 5px; }
.pt-more { margin-left: auto; margin-right: 3px; font: 8px "DejaVu Sans", sans-serif; color: #555; letter-spacing: -1px; }
.psearch { height: 18px; display: flex; align-items: center; justify-content: space-between; padding: 0 4px 0 2px; color: #888; border-bottom: 1px solid #c4c7ca; flex: none; }
.ptree { padding-top: 0; flex: 1; }
.tn { height: 21px; line-height: 21px; display: flex; align-items: center; }
.root { padding-left: 11px; color: #222; }
.tri { width: 0; height: 0; border-style: solid; border-width: 0 0 6px 6px; border-color: transparent transparent #333 transparent; margin-right: 7px; }
.leaf { padding-left: 40px; }
.leaf span { padding: 0 3px; }
.sel-leaf span { background: #c6d7f0; display: block; height: 21px; width: 67px; padding: 0 2px 0 4px; white-space: nowrap; }

.tblwrap { flex: 1; display: flex; flex-direction: column; min-height: 0; overflow: hidden; }
.p2t { border-bottom: 0; }
.props { border-collapse: collapse; table-layout: fixed; width: 242px; }
.props th, .props td { padding: 0; font-weight: 400; height: 21px; border: 1px solid #c5c8cc; white-space: nowrap; overflow: hidden; text-align: left; }
.props th { height: 20px; }
.props .no { width: 22px; background: #efefef; text-align: center; padding-left: 2px; border-left: 0; }
.props .no.blank { background: #fff; border: 0; }
.props .no.act { background: #7ab7f5; color: #fff; font-weight: 700; }
.props .nm { width: 93px; padding-left: 2px; }
.props .vl { width: 127px; padding-left: 3px; }
.props .hd { background: #efefef; text-align: center; padding: 0; }
.props .hdv { background: #7fbaf8; color: #fff; text-align: center; padding: 0; border-color: #9ac8f5; }
.lk { color: #2a62dc; }
.props td.edit { outline: 2px solid #777; outline-offset: -2px; padding-left: 3px; }
.props td.mute { background: #e9e9e9; }
.gr { display: flex; align-items: center; height: 20px; }
.pm { width: 13px; height: 13px; border: 1px solid #999; border-radius: 2px; margin-right: 6px; font: 13px/11px "Liberation Sans", sans-serif; text-align: center; flex: none; background: #fff; }
.cn { width: 17px; margin: 0 6px 0 6px; border-left: 1px solid #aaa; flex: none; align-self: flex-start; }
.cn.full { height: 20px; background: linear-gradient(#aaa, #aaa) center / 100% 1px no-repeat; }
.cn.half { height: 10px; border-bottom: 1px solid #aaa; }
.swatch { width: 107px; height: 9px; margin-left: 5px; background: #666; border: 1px solid #bbb; }
.gutter { width: 22px; flex: 1; background: #efefef; }

.split { width: 4px; flex: none; background: #fff; }
.split-bar { margin-top: 371px; height: 102px; background: #666; position: relative; }
.split-bar i { display: block; width: 0; height: 0; border: 4px solid transparent; border-right-color: #ccc; border-left: 0; position: relative; top: 47px; }

/* canvas */
.canvas { flex: 1; background: #000; position: relative; overflow: hidden; }
.cad { display: block; width: 1037px; height: 776px; }
.slab { fill: #666; stroke: #999; stroke-width: 4px; }
.wl { fill: none; stroke: #fff; stroke-width: 1.500px; }
.wl2 { fill: none; stroke: #fff; stroke-width: 2px; }
.br-g, .br-gs rect, .br-gf { fill: #22d322; }
.mg { fill: #f02ef0; }
.pp { fill: #8a10e8; }
.gy { fill: #999; }
.gyl { fill: none; stroke: #999; stroke-width: 5px; }
.bl-f { fill: #1469fb; }
.yl { fill: #ffff33; }
.dg { fill: none; stroke: #0a7a0a; stroke-width: 1px; }
.r1 { fill: none; stroke: #f00; stroke-width: 1px; }
.dr { fill: none; stroke: #7a0000; stroke-width: 1px; }
.ol { fill: #665f00; }
.rd { fill: #f00; }
.sel-box { fill: none; stroke: #7fa8ff; stroke-width: 2px; }
.edge { fill: #7fb0ff; }
.blk { fill: #000; }
.cy { fill: none; stroke: #45d9c8; stroke-width: 2px; }
.padg rect { fill: #665f00; stroke: #1fe07f; stroke-width: 2px; }
.ax circle { fill: none; stroke: #0a7a0a; stroke-width: 1.200px; }
.axt text { font: 18px "Liberation Sans", sans-serif; fill: #fff; text-anchor: middle; }
.dim { font: 18px "Liberation Sans", sans-serif; fill: #fff; }
.dimv text { font: 18px "Liberation Sans", sans-serif; fill: #fff; text-anchor: middle; }
.tiny { font: 6px "Liberation Sans", sans-serif; fill: #fff; }

/* dialog */
.dialog { position: absolute; left: 118px; top: 147px; width: 482px; height: 627px; background: #eee; display: flex; flex-direction: column; }
.dlg-h { height: 27px; background: #2f80de; color: #e8f1fb; display: flex; align-items: center; justify-content: space-between; padding: 0 9px; flex: none; }
.dlg-x { font: 17px/20px "Liberation Sans", sans-serif; color: #fff; }
.dlg-b { display: grid; grid-template-columns: 226px 226px; grid-template-rows: 140px 140px 254px; gap: 6px; padding: 11px 0 0 12px; }
.thumb { background: #000; }
.thumb svg { display: block; width: 100%; height: 100%; }
.sel-t { box-shadow: inset 0 0 0 3px #f00; }
.wide { grid-column: 1 / 3; }
.th { fill: none; stroke: #fff; stroke-width: 1px; }
.gs { font: 10.500px "Liberation Sans", sans-serif; fill: #0f0; }
.ws { font: 10.500px "Noto Sans CJK SC", sans-serif; fill: #eee; }
.wm { font: 8px "Liberation Sans", sans-serif; fill: #ddd; }
.tt { font: 700 16px "Liberation Serif", "Noto Sans CJK SC", serif; fill: #fff; text-anchor: middle; }
.gb { font: 21px "Liberation Serif", serif; fill: #00c800; }
.wb { font: 19px "Noto Sans CJK SC", sans-serif; fill: #eee; }
.gb2 { font: 22px "Liberation Serif", serif; fill: #00c800; }
.wb2 { font: 20px "Liberation Serif", serif; fill: #eee; }
.ttb { font: 30px "Liberation Serif", "Noto Sans CJK SC", serif; fill: #fff; text-anchor: middle; }
.dlg-f { display: flex; justify-content: flex-end; gap: 6px; padding: 6px 12px 0 0; }
.btn { width: 80px; height: 26px; font: 12px/20px "Noto Sans CJK SC", sans-serif; border: 1px solid #c5ccd6; background: #f8f9fa; color: #333; border-radius: 3px; padding: 0; }
.btn.pri { background: #2f80de; color: #fff; border-color: #2f80de; }

/* annotation arrow */
.anno { position: absolute; left: 0; top: 0; width: 1394px; height: 943px; pointer-events: none; }
.anno-red { fill: #f23d3d; }
.anno-thin { stroke: #f3a0a0; stroke-width: 1px; fill: none; }
```
